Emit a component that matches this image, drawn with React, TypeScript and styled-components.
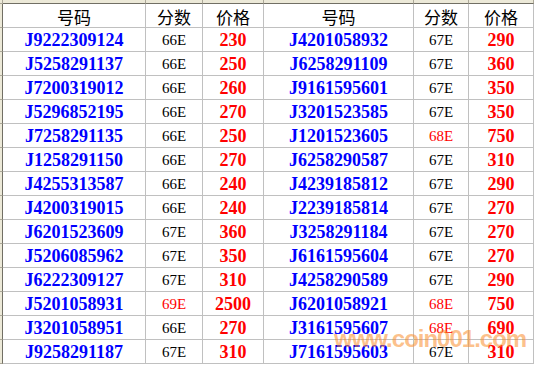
import styled, { createGlobalStyle } from "styled-components";

const GlobalStyle = createGlobalStyle`
  html, body {
    margin: 0;
    padding: 0;
    background: #ffffff;
  }
`;

type Row = { code: string; score: string; price: string; hot?: boolean };

const leftRows: Row[] = [
  { code: "J9222309124", score: "66E", price: "230" },
  { code: "J5258291137", score: "66E", price: "250" },
  { code: "J7200319012", score: "66E", price: "260" },
  { code: "J5296852195", score: "66E", price: "270" },
  { code: "J7258291135", score: "66E", price: "250" },
  { code: "J1258291150", score: "66E", price: "270" },
  { code: "J4255313587", score: "66E", price: "240" },
  { code: "J4200319015", score: "66E", price: "240" },
  { code: "J6201523609", score: "67E", price: "360" },
  { code: "J5206085962", score: "67E", price: "350" },
  { code: "J6222309127", score: "67E", price: "310" },
  { code: "J5201058931", score: "69E", price: "2500", hot: true },
  { code: "J3201058951", score: "66E", price: "270" },
  { code: "J9258291187", score: "67E", price: "310" },
];

const rightRows: Row[] = [
  { code: "J4201058932", score: "67E", price: "290" },
  { code: "J6258291109", score: "67E", price: "360" },
  { code: "J9161595601", score: "67E", price: "350" },
  { code: "J3201523585", score: "67E", price: "350" },
  { code: "J1201523605", score: "68E", price: "750", hot: true },
  { code: "J6258290587", score: "67E", price: "310" },
  { code: "J4239185812", score: "67E", price: "290" },
  { code: "J2239185814", score: "67E", price: "270" },
  { code: "J3258291184", score: "67E", price: "270" },
  { code: "J6161595604", score: "67E", price: "270" },
  { code: "J4258290589", score: "67E", price: "290" },
  { code: "J6201058921", score: "68E", price: "750", hot: true },
  { code: "J3161595607", score: "68E", price: "690", hot: true },
  { code: "J7161595603", score: "67E", price: "310" },
];

const columnLetters = ["B", "C", "D", "E", "F", "G"];

const App = () => {
  return (
    <>
      <GlobalStyle />
      <Page>
        <Sheet>
          {/* 列标题（只露出底部） */}
          <Corner />
          {columnLetters.map((l) => (
            <ColHead key={l}>
              <span>{l}</span>
            </ColHead>
          ))}

          {/* 表头 */}
          <RowHead />
          <HeadCell>号码</HeadCell>
          <HeadCell>分数</HeadCell>
          <HeadCell>价格</HeadCell>
          <HeadCell>号码</HeadCell>
          <HeadCell>分数</HeadCell>
          <HeadCell>价格</HeadCell>

          {leftRows.map((l, i) => {
            const r = rightRows[i];
            return [
              <RowHead key={`h${i}`} />,
              <CodeCell key={`a${i}`}>{l.code}</CodeCell>,
              <ScoreCell key={`b${i}`} $hot={l.hot}>{l.score}</ScoreCell>,
              <PriceCell key={`c${i}`}>{l.price}</PriceCell>,
              <CodeCell key={`d${i}`}>{r.code}</CodeCell>,
              <ScoreCell key={`e${i}`} $hot={r.hot}>{r.score}</ScoreCell>,
              <PriceCell key={`f${i}`}>{r.price}</PriceCell>,
            ];
          })}
        </Sheet>
        <Watermark>www.coin001.com</Watermark>
      </Page>
    </>
  );
};

const Page = styled.div`
  position: relative;
  width: 535px;
  height: 366px;
  overflow: hidden;
  background: #ffffff;
`;

const Sheet = styled.div`
  display: grid;
  grid-template-columns: 3px 143px 57px 61px 150px 55px 65px;
  grid-template-rows: 4px repeat(15, 24px);
`;

const Corner = styled.div`
  box-sizing: border-box;
  background: #ece9d8;
  border-right: 1px solid #aca899;
  border-bottom: 1px solid #aca899;
`;

const ColHead = styled.div`
  box-sizing: border-box;
  background: #ece9d8;
  border-right: 1px solid #aca899;
  border-bottom: 1px solid #716f64;
  overflow: hidden;
  display: flex;
  justify-content: center;

  span {
    font-family: "Liberation Sans", Arial, sans-serif;
    font-size: 11px;
    line-height: 11px;
    margin-top: -9px;
    color: #000000;
  }
`;

const RowHead = styled.div`
  box-sizing: border-box;
  background: #ece9d8;
  border-right: 1px solid #716f64;
  border-bottom: 1px solid #aca899;
`;

const BaseCell = styled.div`
  box-sizing: border-box;
  border-right: 1px solid #c0c0c0;
  border-bottom: 1px solid #c0c0c0;
  display: flex;
  align-items: center;
  justify-content: center;
  white-space: nowrap;
  overflow: hidden;
`;

const HeadCell = styled(BaseCell)`
  font-family: "Noto Sans CJK SC", "Noto Sans", sans-serif;
  font-size: 17px;
  color: #000000;
  padding-top: 1px;
`;

const CodeCell = styled(BaseCell)`
  font-family: "Liberation Serif", "Times New Roman", serif;
  font-weight: 700;
  font-size: 18px;
  color: #0000ff;
  padding-top: 2px;
`;

const ScoreCell = styled(BaseCell)<{ $hot?: boolean }>`
  font-family: "Liberation Serif", "Times New Roman", serif;
  font-size: 15px;
  color: ${(p) => (p.$hot ? "#ff0000" : "#000000")};
  padding-top: 2px;
`;

const PriceCell = styled(BaseCell)`
  font-family: "Liberation Serif", "Times New Roman", serif;
  font-weight: 700;
  font-size: 18px;
  color: #ff0000;
  padding-top: 2px;
`;

const Watermark = styled.div`
  position: absolute;
  left: 334px;
  top: 327px;
  font-family: "Liberation Sans", Arial, sans-serif;
  font-weight: 700;
  font-size: 24px;
  line-height: 24px;
  letter-spacing: -1px;
  color: rgba(250, 140, 40, 0.55);
  pointer-events: none;
`;

export default App;
